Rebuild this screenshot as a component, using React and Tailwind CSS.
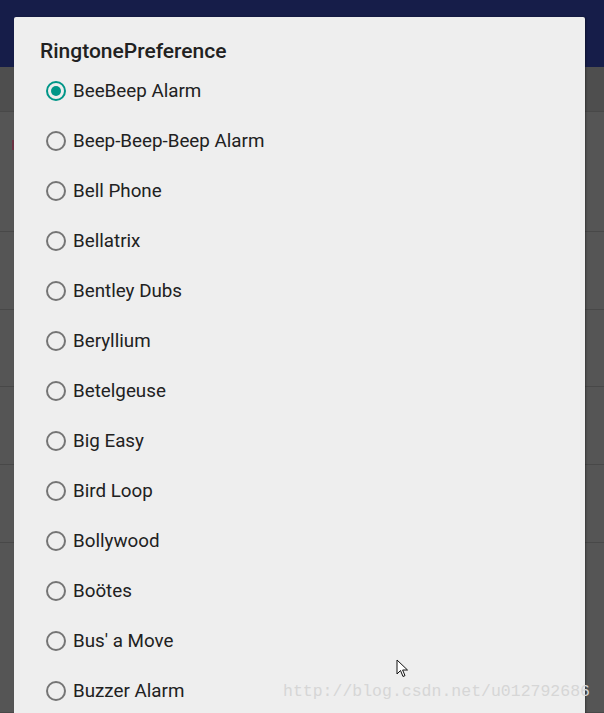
import React from 'react';

const ringtones = [
  'BeeBeep Alarm',
  'Beep-Beep-Beep Alarm',
  'Bell Phone',
  'Bellatrix',
  'Bentley Dubs',
  'Beryllium',
  'Betelgeuse',
  'Big Easy',
  'Bird Loop',
  'Bollywood',
  'Boötes',
  "Bus' a Move",
  'Buzzer Alarm',
];

const Radio = ({ checked }) => (
  <svg width="22" height="22" viewBox="0 0 22 22" className="shrink-0">
    <circle cx="11" cy="11" r="9" fill="none" stroke={checked ? '#009688' : '#757575'} strokeWidth="2" />
    {checked && <circle cx="11" cy="11" r="5" fill="#009688" />}
  </svg>
);

const App = () => {
  return (
    <div className="relative w-[604px] h-[713px] overflow-hidden bg-[#555555]" style={{ fontFamily: 'Roboto, "Noto Sans", sans-serif' }}>
      {/* dimmed app behind the dialog */}
      <div className="flex flex-col">
        <div className="h-[67px] bg-[#161d49]" />
        <div className="h-[45px] bg-[#4e4e4e] border-b border-[#484848]" />
        <div className="h-[120px] border-b border-[#484848] pl-3 pt-7">
          <div className="w-[3px] h-[10px] bg-[#6b3344]" />
        </div>
        <div className="h-[78px] border-b border-[#484848]" />
        <div className="h-[77px] border-b border-[#484848]" />
        <div className="h-[78px] border-b border-[#484848]" />
        <div className="h-[78px] border-b border-[#484848]" />
        <div className="h-[170px] border-b border-[#484848]" />
      </div>

      {/* dialog */}
      <div className="absolute left-[14px] top-[17px] w-[571px] h-[720px] bg-[#eeeeee] rounded-[2px] shadow-[1px_0_2px_rgba(0,0,0,0.35)]">
        <div className="pl-[26px] pt-[20px] h-[49px] text-[21px] leading-[28px] font-medium text-[#212121]">
          RingtonePreference
        </div>
        <div className="flex flex-col">
          {ringtones.map((name, i) => (
            <div key={name} className="h-[50px] flex items-center pl-[31px]">
              <Radio checked={i === 0} />
              <span className="ml-[6px] text-[18.8px] text-[#212121]">{name}</span>
            </div>
          ))}
        </div>
      </div>

      {/* mouse cursor */}
      <svg className="absolute left-[396px] top-[659px]" width="13" height="20" viewBox="0 0 13 20">
        <path d="M1 1 L1 15 L4.5 11.5 L7 17.5 L9 16.6 L6.6 11 L11.5 11 Z" fill="#ffffff" stroke="#111111" strokeWidth="1" strokeLinejoin="round" />
      </svg>

      {/* watermark */}
      <div className="absolute left-[283px] top-[680px] text-[16.5px] leading-[24px] text-[#d6d6d6] whitespace-nowrap" style={{ fontFamily: '"Liberation Mono", monospace' }}>
        http://blog.csdn.net/u012792686
      </div>
    </div>
  );
};

export default App;
